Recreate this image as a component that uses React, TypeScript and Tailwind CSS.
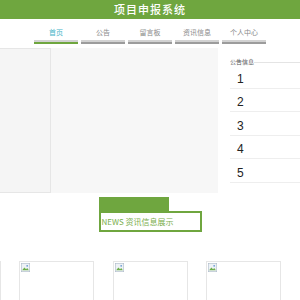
import React from "react";

const TABS = ["首页", "公告", "留言板", "资讯信息", "个人中心"];
const NOTICES = ["1", "2", "3", "4", "5"];

function BrokenImage() {
  return (
    <svg width="9" height="9" viewBox="0 0 16 16" className="m-[1px]">
      <rect x="0.5" y="0.5" width="15" height="15" fill="#eef2f6" stroke="#a9b7c6" />
      <path d="M2 13 L6 8 L9 11 L11 9 L14 13 Z" fill="#6cae4b" />
      <circle cx="11" cy="5" r="1.6" fill="#6d9bd2" />
    </svg>
  );
}

export default function App() {
  return (
    <div
      className="w-[300px] h-[300px] overflow-hidden bg-white"
      style={{ fontFamily: '"Noto Sans CJK SC", "Liberation Sans", sans-serif' }}
    >
      {/* 顶栏 */}
      <div className="h-[19px] bg-[#6fa63f] flex items-center justify-center">
        <span className="text-white text-[11px] font-medium tracking-[1px] leading-none">
          项目申报系统
        </span>
      </div>

      {/* 导航 */}
      <div className="flex justify-center gap-[3px] pt-[8px]">
        {TABS.map((t, i) => (
          <div key={t} className="w-[44px] flex flex-col items-center">
            <span
              className={`text-[7px] leading-[10px] ${
                i === 0 ? "text-[#45b4c8]" : "text-[#8a8a8a]"
              }`}
            >
              {t}
            </span>
            <div className="mt-[3px] w-full h-[4px] flex flex-col">
              <div className="h-[2px] bg-[#d2d2d2]" />
              <div className={`h-[2px] ${i === 0 ? "bg-[#6fa63f]" : "bg-[#9c9c9c]"}`} />
            </div>
          </div>
        ))}
      </div>

      {/* 主体 */}
      <div className="flex mt-[4px]">
        <div className="flex w-[218px] h-[145px] shrink-0 bg-[#f7f7f7]">
          <div className="w-[51px] h-[145px] border border-l-0 border-[#e6e6e6] bg-[#f5f5f5]" />
        </div>
        <div className="ml-[12px] w-[80px] shrink-0">
          <div className="flex items-center mt-[11px]">
            <span className="text-[6px] leading-none text-[#555]">公告信息</span>
            <div className="flex-1 h-px bg-[#e4e4e4]" />
          </div>
          {NOTICES.map((n) => (
            <div
              key={n}
              className="h-[23.5px] border-b border-[#eeeeee] flex items-center pt-[5px] pl-[7px] text-[12px] text-[#222]"
              style={{ fontFamily: '"Liberation Sans", sans-serif' }}
            >
              {n}
            </div>
          ))}
        </div>
      </div>

      {/* 资讯 */}
      <div className="flex justify-center mt-[4px]">
        <div className="w-[103px] flex flex-col">
          <div className="w-[70px] h-[14px] bg-[#6fa63f]" />
          <div className="h-[21px] border-2 border-[#6fa63f] bg-white flex items-center">
            <span className="text-[8px] leading-none text-[#7aae4c] pl-[1px]">
              NEWS 资讯信息展示
            </span>
          </div>
        </div>
      </div>

      <div className="flex justify-center gap-[18.5px] mt-[29px]">
        {[0, 1, 2, 3, 4].map((k) => (
          <div key={k} className="w-[75px] h-[60px] shrink-0 border border-[#e6e6e6] bg-white">
            <BrokenImage />
          </div>
        ))}
      </div>
    </div>
  );
}
